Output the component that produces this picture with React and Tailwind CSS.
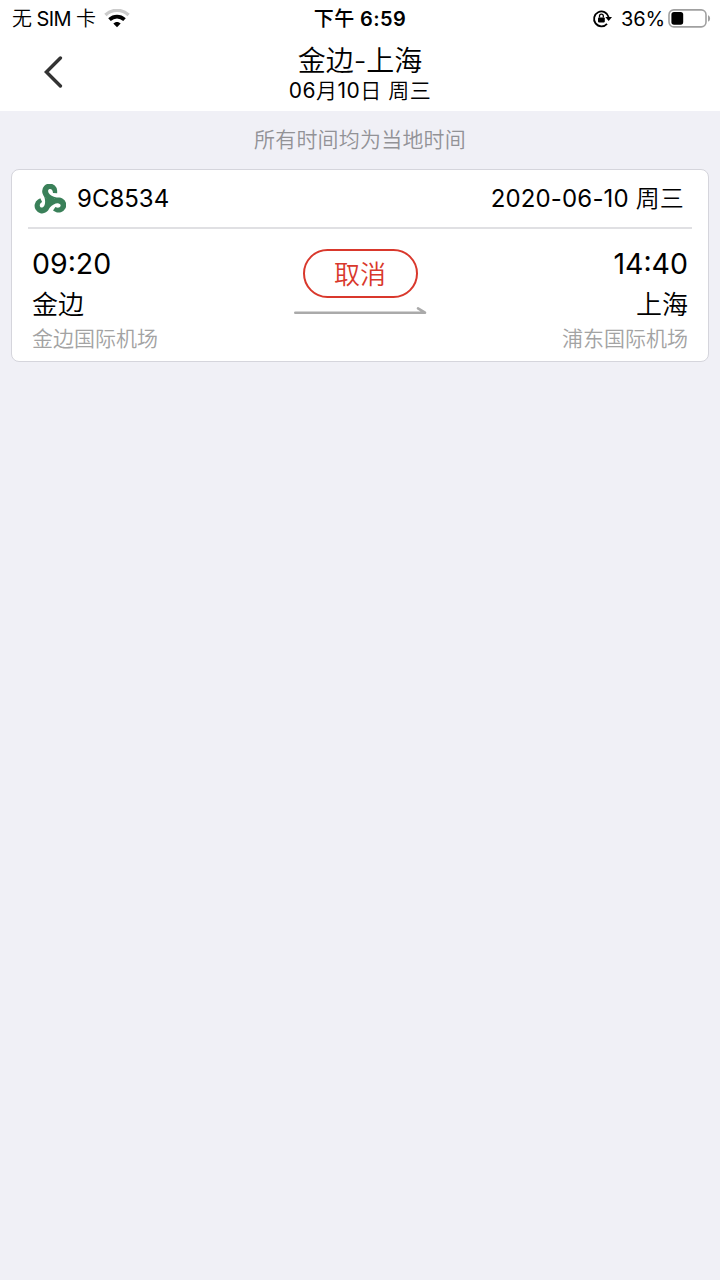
function WifiIcon() {
  return (
    <svg className="w-[26px] h-5 ml-[9px] shrink-0" viewBox="0 0 26 20" fill="none">
      <path d="M1.4 6C8 -.2 18 -.2 24.6 6" stroke="#cbcbcb" strokeWidth="3.4" />
      <path d="M5.5 10.6C10 6.6 16 6.6 20.5 10.6" stroke="#000" strokeWidth="3.8" />
      <path d="M9.3 14.6C11.3 12.5 14.7 12.5 16.7 14.6L13 18.2Z" fill="#000" />
    </svg>
  );
}

function RotationLockIcon() {
  return (
    <svg className="w-5 h-5 mr-[9px] shrink-0" viewBox="0 0 20 20" fill="none">
      <path d="M15 14.8A7.4 7.4 0 1 1 16.6 8" stroke="#000" strokeWidth="1.8" />
      <path d="M13.3 8H20L16.7 12Z" fill="#000" />
      <rect x="6" y="8.4" width="6.8" height="5" rx="0.8" fill="#000" />
      <path d="M7.5 8.6V7.1a1.9 1.9 0 0 1 3.8 0V8.6" stroke="#000" strokeWidth="1.3" />
    </svg>
  );
}

function BatteryIcon() {
  return (
    <svg className="w-[43px] h-5 ml-[3px] shrink-0" viewBox="0 0 43 20" fill="none">
      <rect x="1" y="0.9" width="37" height="17" rx="4.8" stroke="#a0a0a0" strokeWidth="1.6" />
      <rect x="3.4" y="3.1" width="11.8" height="12.6" rx="2.6" fill="#000" />
      <path d="M40 6.2c2.8.9 2.8 5.5 0 6.4Z" fill="#a0a0a0" />
    </svg>
  );
}

function AirlineLogo() {
  // one hook of the three-armed mark, repeated around its centre
  const arm =
    "M48.5 51L31 39C28 33 24.5 29 24.5 21.5A22 21.5 0 0 1 69.5 20V28L57 27C57 19 52 14 47 15C42 16 41 22 44 27C48 33 56 38 67.6 40.8Z";
  return (
    <svg className="w-8 h-[30px] shrink-0" viewBox="0 0 96 90">
      <g fill="#3a8059">
        <path d={arm} />
        <path d={arm} transform="rotate(120 48.5 50)" />
        <path d={arm} transform="rotate(240 48.5 50)" />
        <circle cx="48.5" cy="50" r="8" />
      </g>
    </svg>
  );
}

function StatusBar() {
  return (
    <div className="grid grid-cols-3 items-center h-9 pl-3 pr-[9px] text-[20px] leading-9">
      <div className="flex items-center">
        <span className="whitespace-pre tracking-[-0.6px]">
          <span className="font-[350]">无</span> SIM <span className="font-[350]">卡</span>
        </span>
        <WifiIcon />
      </div>
      <div className="pt-px pr-[3px] text-center font-semibold tracking-[0.4px]">
        <span className="font-medium">下午</span> 6:59
      </div>
      <div className="flex items-center justify-end">
        <RotationLockIcon />
        <span className="pt-px tracking-[-0.1px]">36%</span>
        <BatteryIcon />
      </div>
    </div>
  );
}

function Header() {
  return (
    <header className="grid grid-cols-[80px_1fr_80px] h-[75px]">
      <button className="flex items-center justify-end pr-[16px] pb-[3px]" aria-label="返回">
        <svg className="w-5 h-8" viewBox="0 0 20 32" fill="none">
          <path d="M16.4 2L2.4 16L16.4 30" stroke="#333" strokeWidth="3.4" strokeLinecap="round" />
        </svg>
      </button>
      <div className="flex flex-col items-center pt-[9px]">
        <h1 className="text-[28px] leading-8 font-[350]">金边-上海</h1>
        <p className="text-[21px] leading-7 tracking-[0.5px]">
          06<span className="font-[350]">月</span>10<span className="font-[350]">日 周三</span>
        </p>
      </div>
    </header>
  );
}

function Stop({ time, city, airport, className }) {
  return (
    <div className={className}>
      <div className="text-[28.5px] leading-9">{time}</div>
      <div className="text-[26px] leading-10 mt-[3px] font-[350]">{city}</div>
      <div className="text-[21px] leading-7 text-[#a3a3a3] font-[350]">{airport}</div>
    </div>
  );
}

function FlightCard() {
  return (
    <section className="mx-[11px] h-[193px] px-4 bg-white border border-[#d5d5dc] rounded-lg">
      <div className="flex items-center justify-between h-[59px] pl-[6px] pr-2 border-b-2 border-[#e0e0e3] text-[24px]">
        <div className="flex items-center">
          <AirlineLogo />
          <span className="ml-[11px] pt-px">9C8534</span>
        </div>
        <span className="pt-px tracking-[0.15px]">
          2020-06-10 <span className="font-[350]">周三</span>
        </span>
      </div>
      <div className="grid grid-cols-[1fr_134px_1fr] px-1 pt-[17px]">
        <Stop time="09:20" city="金边" airport="金边国际机场" />
        <div className="flex flex-col items-center pt-[3px]">
          <div className="flex items-center justify-center w-[115px] h-[49px] pt-px border-2 border-[#d9382c] rounded-full text-[26px] text-[#d9382c] font-[350]">
            取消
          </div>
          <svg className="w-[134px] h-3 mt-[6px]" viewBox="0 0 134 12" fill="none">
            <path d="M2.3 8.7H132L125 4.4" stroke="#aaa" strokeWidth="2.6" strokeLinecap="round" strokeLinejoin="round" />
          </svg>
        </div>
        <Stop time="14:40" city="上海" airport="浦东国际机场" className="text-right" />
      </div>
    </section>
  );
}

export default function App() {
  return (
    <div className="min-h-screen bg-[#f0f0f6] text-black font-[Inter,'Noto_Sans_CJK_SC',sans-serif]">
      <div className="bg-white">
        <StatusBar />
        <Header />
      </div>
      <p className="h-[58px] leading-[58px] text-center text-[21px] tracking-[0.2px] text-[#929296] font-[350]">
        所有时间均为当地时间
      </p>
      <FlightCard />
    </div>
  );
}
